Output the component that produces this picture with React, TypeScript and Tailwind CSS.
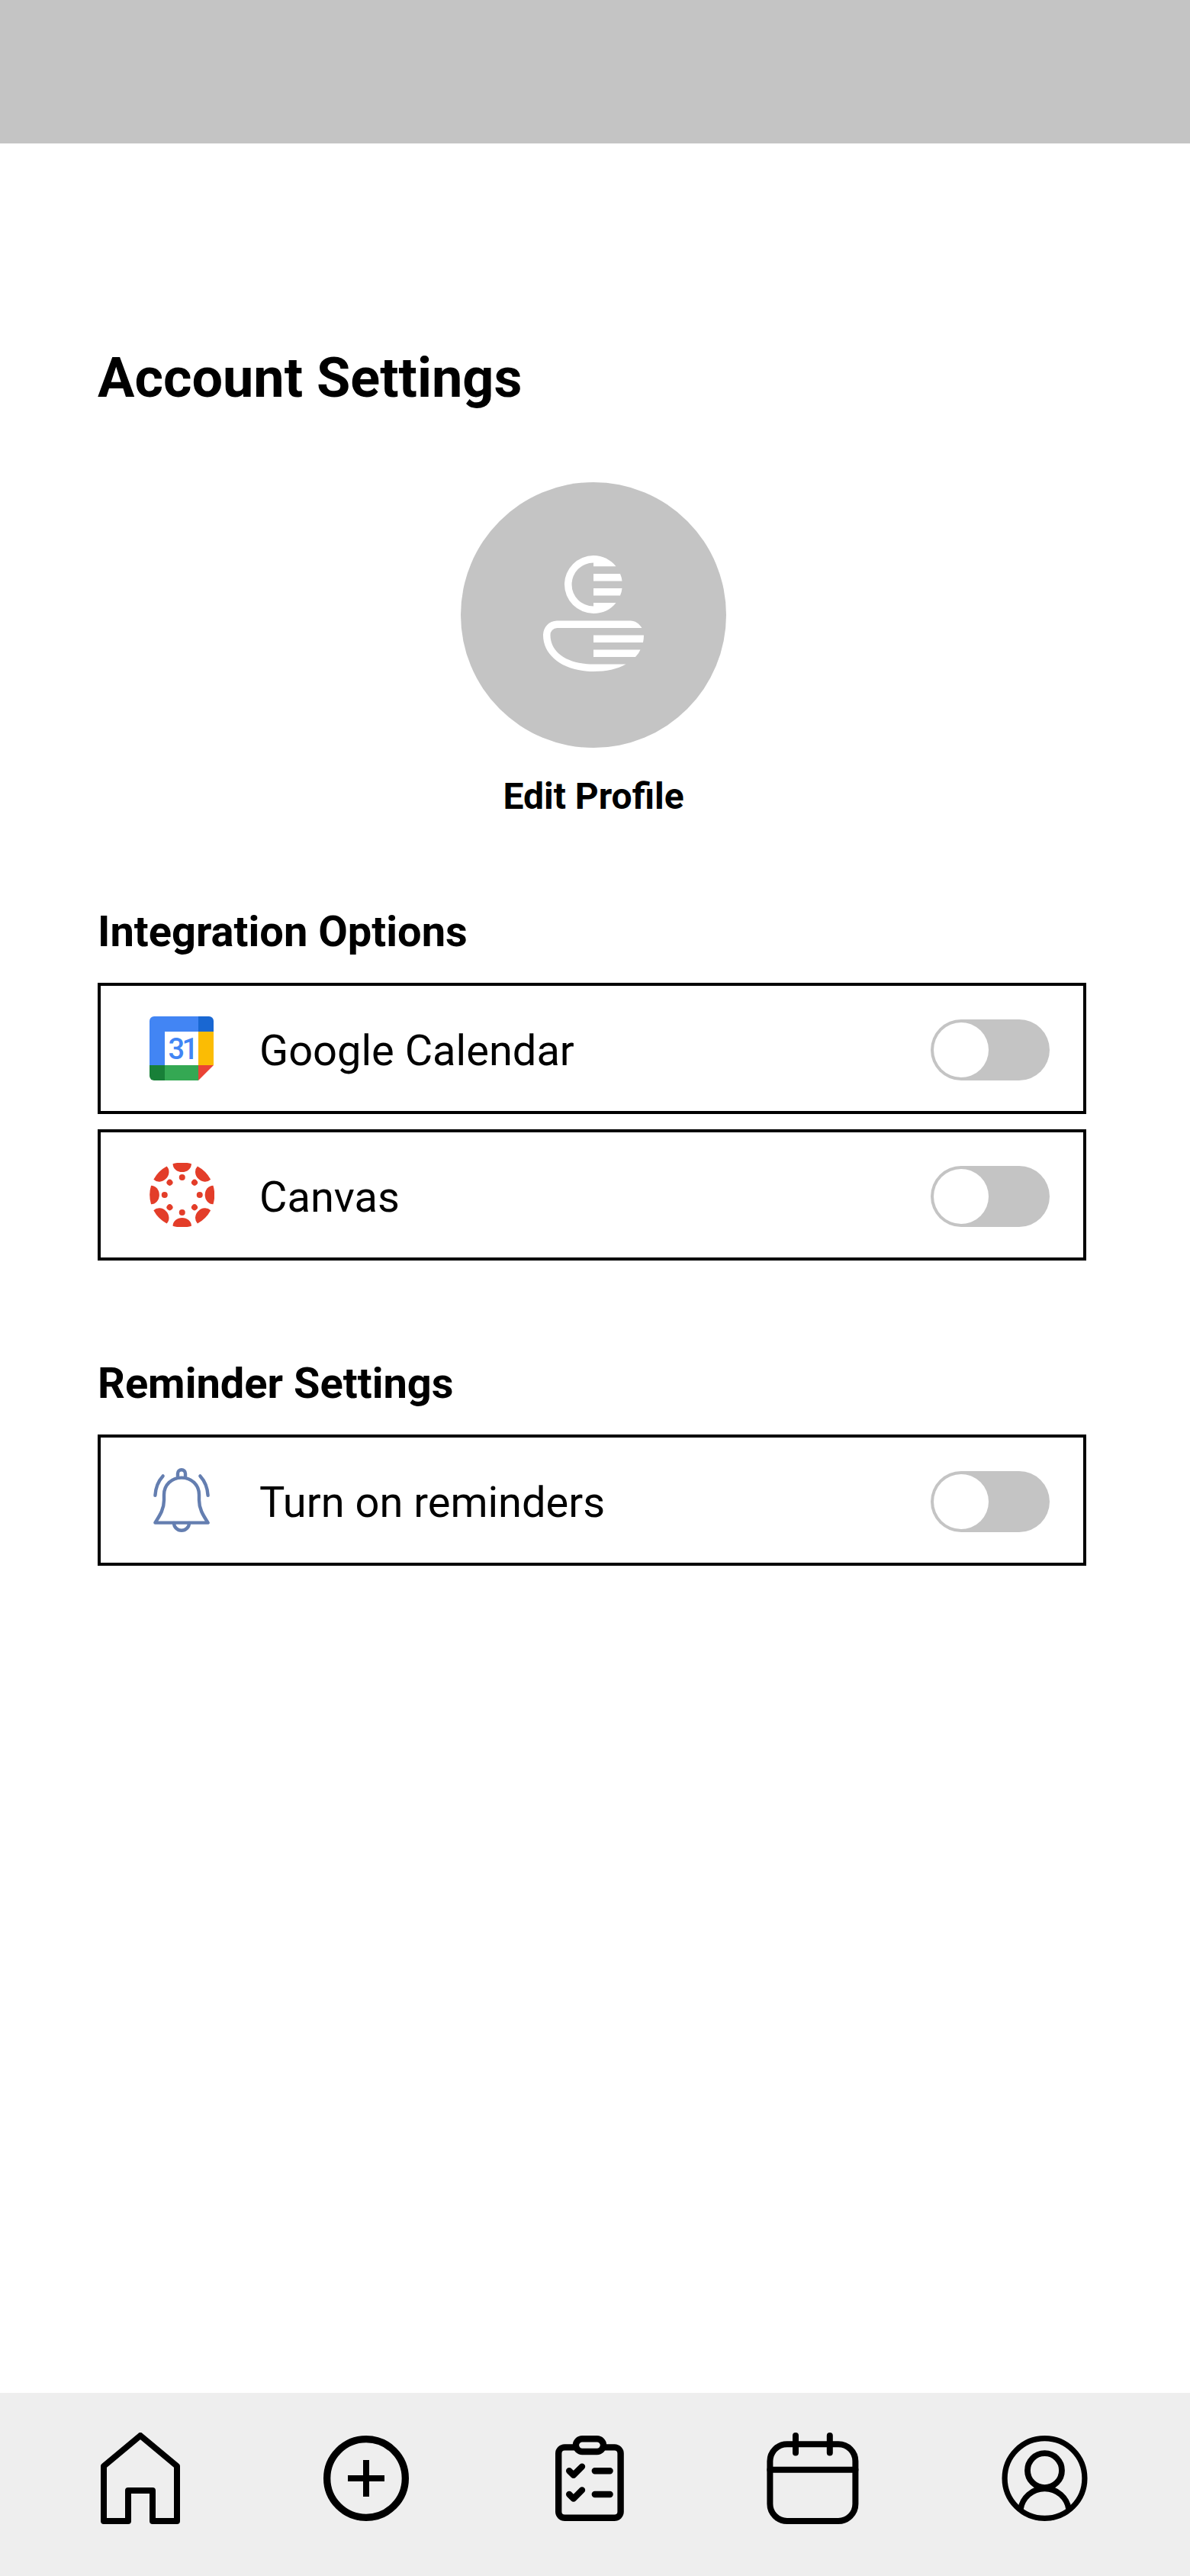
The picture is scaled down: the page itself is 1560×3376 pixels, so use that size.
import React, { useState } from "react";

function GoogleCalendarIcon() {
  return (
    <svg width="84" height="84" viewBox="0 0 84 84" className="block">
      <path d="M6 0H64V20H20V64H0V6A6 6 0 0 1 6 0Z" fill="#4285f4" />
      <path d="M64 0H78A6 6 0 0 1 84 6V20H64Z" fill="#1967d2" />
      <path d="M64 20H84V64H64Z" fill="#fbbc04" />
      <path d="M20 64H64V84H20Z" fill="#34a853" />
      <path d="M0 64H20V84H6A6 6 0 0 1 0 78Z" fill="#188038" />
      <path d="M64 64H84L64 84Z" fill="#ea4335" />
      <text x="24.5 42.5" y="56" fill="#4285f4" className="font-[Roboto,sans-serif] text-[38px] font-medium">31</text>
    </svg>
  );
}

const spokes = [0, 45, 90, 135, 180, 225, 270, 315];

function CanvasIcon() {
  return (
    <svg width="85" height="84" viewBox="0 0 85 84" className="block">
      {spokes.map((a) => (
        <g key={a} fill="#e33d29" transform={`rotate(${a} 42.75 42)`}>
          <path d="M30.55 1.3A42.2 42.2 0 0 1 54.95 1.3A12.2 10.8 0 0 1 30.55 1.3Z" />
          <circle cx="42.75" cy="19" r="4" />
        </g>
      ))}
    </svg>
  );
}

function BellIcon() {
  return (
    <svg width="74" height="84" viewBox="0 0 74 84" className="block" fill="none" stroke="#647eb0" strokeWidth="4.4" strokeLinecap="round" strokeLinejoin="round">
      <path d="M2.4 71.6C8.5 62 14 54 14 42V35C14 22 24 12.6 37 12.6S60 22 60 35V42C60 54 65.5 62 71.6 71.6Z" />
      <path d="M32 12.5V7.2A5 5 0 0 1 42 7.2V12.5" />
      <path d="M27 72A10 9.8 0 0 0 47 72" />
      <path d="M12.6 10.4C6 17.5 3 26 2.4 35.8" />
      <path d="M61.4 10.4C68 17.5 71 26 71.6 35.8" />
    </svg>
  );
}

function AvatarIcon() {
  return (
    <svg width="133" height="153" viewBox="0 0 133 153" className="block" fill="#fff">
      <path d="M66 0A38 38 0 0 0 66 76C78 76 88.5 71 95.5 62H66V66.5A28.500 28.500 0 0 1 66 9.500V14.200H95.500C88.500 5.500 78 0 66 0Z" />
      <path d="M66 24H101Q103 28.500 103.500 33.500H66ZM66 43H103.500Q103 48 101 52.500H66Z" />
      <path d="M18 85.500H114.500C121 85.500 126 89.500 129.500 95H18.500A9 9 0 0 0 9.500 104.500C9.500 126.500 31 142.500 66 142.500H108.500C97 149 83 152 66 152C27 152 0 131.500 0 104.500A18.500 18.500 0 0 1 18 85.500Z" />
      <path d="M66 104.500H132Q132 109.500 131 114H66ZM66 123.500H127.500Q125.500 128.500 121 133H66Z" />
    </svg>
  );
}

function Toggle({ label }: { label: string }) {
  const [on, setOn] = useState(false);
  return (
    <button
      role="switch"
      aria-checked={on}
      aria-label={label}
      onClick={() => setOn(!on)}
      className={`mt-1 flex h-20 w-[156px] rounded-full p-1 ${on ? "justify-end bg-[#34a853]" : "justify-start bg-[#c4c4c4]"}`}
    >
      <span className="size-[72px] rounded-full bg-white" />
    </button>
  );
}

function Row({ icon, label }: { icon: React.ReactNode; label: string }) {
  return (
    <div className="flex h-[172px] items-center border-4 border-black pr-11 pl-[64px]">
      <div className="flex w-[85px] justify-start">{icon}</div>
      <span className="ml-[59px] flex-1 pt-[5px] text-[56px] leading-[66px]">{label}</span>
      <Toggle label={label} />
    </div>
  );
}

function Nav() {
  return (
    <nav className="flex h-60 items-center bg-[#eee] pb-4 pl-[132px] text-black">
      <svg width="104" height="120" viewBox="0 0 104 120" fill="none" stroke="currentColor" strokeWidth="8" strokeLinejoin="round">
        <path d="M52 4L4 44V116H36V76H68V116H100V44Z" />
      </svg>
      <svg className="ml-[188px]" width="112" height="112" viewBox="0 0 112 112" fill="none" stroke="currentColor">
        <circle cx="56" cy="56" r="51.333" strokeWidth="9.333" />
        <path d="M56 32V80M32 56H80" strokeWidth="8" />
      </svg>
      <svg className="ml-[192px]" width="90" height="112" viewBox="0 0 90 112" fill="none" stroke="currentColor" strokeWidth="8.400" strokeLinecap="round" strokeLinejoin="round">
        <path d="M27 15.400H12.200A8 8 0 0 0 4.200 23.400V99.800A8 8 0 0 0 12.200 107.800H77.600A8 8 0 0 0 85.600 99.800V23.400A8 8 0 0 0 77.600 15.400H63" />
        <rect x="26.900" y="4.200" width="36.100" height="16.800" rx="8.400" />
        <path d="M18.200 46.200L23.800 51.800L35 40.600M18.200 77L23.800 82.600L35 71.400M51.800 46.200H71.600M51.800 77H71.600" />
      </svg>
      <svg className="ml-[187px]" width="121" height="120" viewBox="0 0 121 120" fill="none" stroke="currentColor" strokeWidth="8" strokeLinecap="round">
        <rect x="4.400" y="15.200" width="112" height="100.800" rx="22.400" />
        <path d="M4.400 48.700H116.400M38 4V26.500M82.800 4V26.500" />
      </svg>
      <svg className="ml-[187px]" width="113" height="112" viewBox="0 0 113 112" fill="none" stroke="currentColor">
        <circle cx="56.500" cy="56" r="52.400" strokeWidth="7.200" />
        <circle cx="56.500" cy="45.700" r="22.500" strokeWidth="7.800" />
        <path d="M24.800 97A32 32 0 0 1 88.200 97" strokeWidth="7.600" />
      </svg>
    </nav>
  );
}

export default function App() {
  return (
    <div className="flex h-[3376px] w-[1560px] flex-col bg-white font-[Roboto,sans-serif] text-black">
      <header className="h-[188px] bg-[#c4c4c4]" />
      <main className="flex-1 pt-[266px] pr-[136px] pl-32">
        <h1 className="text-[72px] leading-[84px] font-bold">Account Settings</h1>
        <section className="mt-[94px] flex flex-col items-center pl-1">
          <div className="flex size-[348px] justify-center rounded-full bg-[#c4c4c4] pt-24">
            <AvatarIcon />
          </div>
          <p className="mt-9 text-[48px] leading-[56px] font-bold">Edit Profile</p>
        </section>
        <section className="mt-[116px]">
          <h2 className="text-[56px] leading-[66px] font-bold">Integration Options</h2>
          <div className="mt-[34px] flex flex-col gap-5">
            <Row icon={<GoogleCalendarIcon />} label="Google Calendar" />
            <Row icon={<CanvasIcon />} label="Canvas" />
          </div>
        </section>
        <section className="mt-[128px]">
          <h2 className="text-[56px] leading-[66px] font-bold">Reminder Settings</h2>
          <div className="mt-[34px]">
            <Row icon={<div className="pl-[5px]"><BellIcon /></div>} label="Turn on reminders" />
          </div>
        </section>
      </main>
      <Nav />
    </div>
  );
}
